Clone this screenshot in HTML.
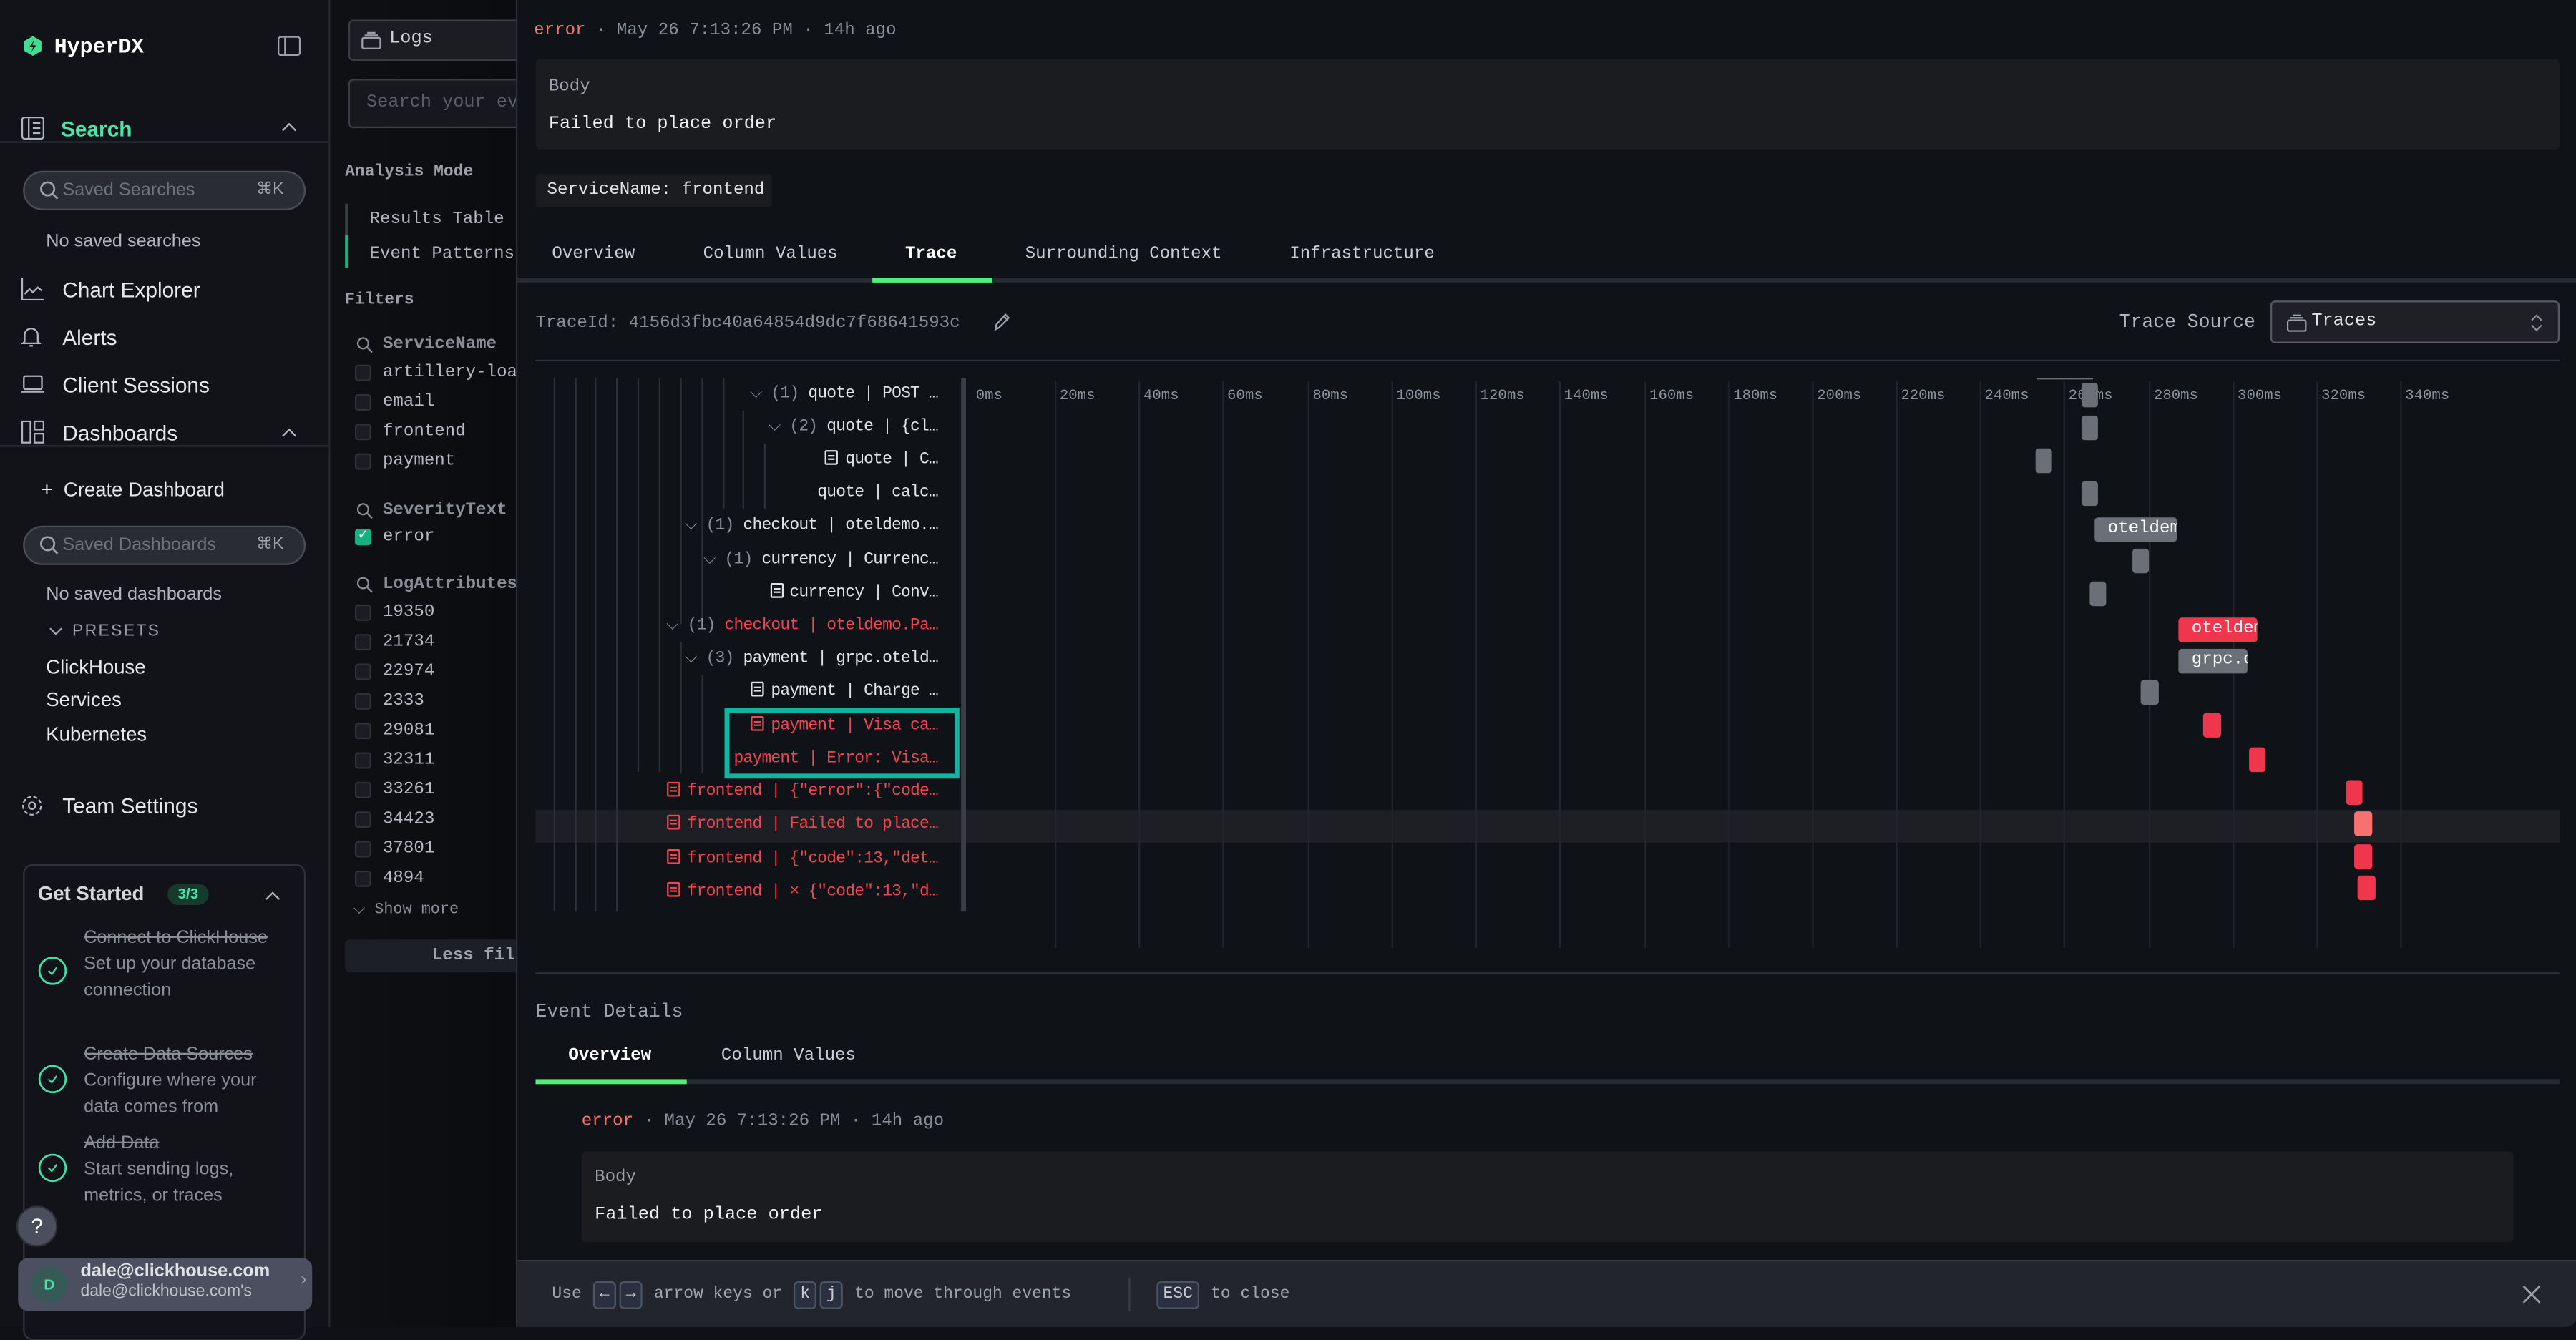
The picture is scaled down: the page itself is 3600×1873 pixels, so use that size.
<!DOCTYPE html>
<html><head><meta charset="utf-8"><style>
*{box-sizing:border-box;margin:0;padding:0}
html,body{width:3600px;height:1856px;overflow:hidden;background:#0f1116}
#w{position:absolute;left:0;top:0;width:1568px;height:808px;transform:scale(2.29592);transform-origin:0 0;background:#0f1116;font-family:"Liberation Sans",sans-serif;color:#c9ccd3}
.a{position:absolute;white-space:nowrap}
.m{font-family:"Liberation Mono",monospace}
.sb{left:0;top:0;width:201px;height:808px;background:#111318;border-right:1px solid #24272e}
.mid{left:201px;top:0;width:113px;height:808px;background:linear-gradient(90deg,#0e1014,#0b0c10)}
.dr{left:314px;top:0;width:1254px;height:808px;background:#0f1217;border-left:1px solid #2a2d33}
.nav{font-size:13px;color:#e6e7ea}
.pill{border:1px solid #4a4e57;background:#2a2c33;border-radius:14px;height:24px}
.cb{width:10px;height:10px;border:1px solid #2e3138;background:#1b1d22;border-radius:2px}
.fl{font-size:10.5px;color:#b7bac2}
.row{height:20px;font-size:10px;line-height:20px;letter-spacing:-0.35px}
.vl{position:absolute;width:1px;background:#2c2f35}
.bar{position:absolute;height:15px;border-radius:2px;background:#6b7078;font-size:10.5px;color:#fff;line-height:15px;padding-left:8px;overflow:hidden;font-family:"Liberation Mono",monospace}
.red{background:#f0364d}
.kb{display:inline-block;border:1px solid #4a5568;border-radius:3px;background:#2b3040;padding:0 3px;height:17px;line-height:15px;margin:0 1px;color:#c9ccd3}
.di{display:inline-block;width:8px;height:9px;border:1px solid currentColor;border-radius:1px;vertical-align:-1px;margin-right:4px;background:linear-gradient(currentColor,currentColor) 1px 2px/4px 1px no-repeat,linear-gradient(currentColor,currentColor) 1px 4px/4px 1px no-repeat}
</style></head><body><div id="w">

<!-- sidebar -->
<div class="a sb">
 <svg class="a" style="left:14px;top:22px" width="12" height="12" viewBox="0 0 12 12"><polygon points="6,0 11.2,3 11.2,9 6,12 0.8,9 0.8,3" fill="#3ee08f"/><path d="M6.8 2.5 4 6.4h2.2L5.2 9.5 8 5.6H5.8z" fill="#111318"/></svg>
 <div class="a m" style="left:33px;top:21px;font-size:13px;font-weight:bold;color:#fff">HyperDX</div>
 <svg class="a" style="left:169px;top:22px" width="14" height="12"><rect x=".5" y=".5" width="13" height="11" rx="1.5" fill="none" stroke="#9ca0a8"/><line x1="4.5" y1="1" x2="4.5" y2="11" stroke="#9ca0a8"/></svg>
 <svg class="a" style="left:13px;top:71px" width="14" height="14"><rect x=".5" y=".5" width="13" height="13" rx="1.5" fill="none" stroke="#b0b4bc"/><path d="M4.5 1v12M7 4h4.5M7 7h4.5M7 10h4.5" stroke="#b0b4bc"/></svg>
 <div class="a" style="left:37px;top:71px;font-size:13px;font-weight:bold;color:#4ee3a6">Search</div>
 <svg class="a" style="left:171px;top:74px" width="10" height="6"><path d="M1 5.5 5 1.5l4 4" fill="none" stroke="#b0b4bc"/></svg>
 <div class="a" style="left:0;top:86px;width:200px;height:1px;background:#2a2d33"></div>
 <div class="a pill" style="left:14px;top:104px;width:172px"></div>
 <svg class="a" style="left:24px;top:110px" width="12" height="12"><circle cx="5" cy="5" r="4" fill="none" stroke="#9ca0a8" stroke-width="1.2"/><path d="M8 8l3 3" stroke="#9ca0a8" stroke-width="1.2"/></svg>
 <div class="a" style="left:38px;top:110px;font-size:11px;color:#6d717a">Saved Searches</div>
 <div class="a" style="left:156px;top:110px;font-size:10px;color:#9ca0a8">⌘K</div>
 <div class="a" style="left:28px;top:141px;font-size:11px;color:#b0b4bc">No saved searches</div>
 <svg class="a" style="left:13px;top:169px" width="14" height="14"><path d="M.5 0v13.5H14M2 10l3-3 2 2 3-3 2.5 2" fill="none" stroke="#b0b4bc"/></svg>
 <div class="a nav" style="left:38px;top:169px">Chart Explorer</div>
 <svg class="a" style="left:13px;top:198px" width="12" height="14"><path d="M2 10V6a4 4 0 0 1 8 0v4l1 1H1zM5 12.5h2" fill="none" stroke="#b0b4bc"/></svg>
 <div class="a nav" style="left:38px;top:198px">Alerts</div>
 <svg class="a" style="left:13px;top:228px" width="14" height="12"><rect x="1.5" y="1" width="11" height="8" rx="1" fill="none" stroke="#b0b4bc"/><path d="M0 10.5h14" stroke="#b0b4bc"/></svg>
 <div class="a nav" style="left:38px;top:227px">Client Sessions</div>
 <svg class="a" style="left:13px;top:256px" width="14" height="14"><rect x=".5" y=".5" width="5" height="13" fill="none" stroke="#b0b4bc"/><rect x="8" y=".5" width="5.5" height="5" fill="none" stroke="#b0b4bc"/><rect x="8" y="8" width="5.5" height="5.5" fill="none" stroke="#b0b4bc"/></svg>
 <div class="a nav" style="left:38px;top:256px">Dashboards</div>
 <svg class="a" style="left:171px;top:260px" width="10" height="6"><path d="M1 5.5 5 1.5l4 4" fill="none" stroke="#b0b4bc"/></svg>
 <div class="a" style="left:0;top:271px;width:200px;height:1px;background:#2a2d33"></div>
 <div class="a" style="left:25px;top:291px;font-size:12px;color:#e6e7ea">+&nbsp; Create Dashboard</div>
 <div class="a pill" style="left:14px;top:320px;width:172px"></div>
 <svg class="a" style="left:24px;top:326px" width="12" height="12"><circle cx="5" cy="5" r="4" fill="none" stroke="#9ca0a8" stroke-width="1.2"/><path d="M8 8l3 3" stroke="#9ca0a8" stroke-width="1.2"/></svg>
 <div class="a" style="left:38px;top:326px;font-size:11px;color:#6d717a">Saved Dashboards</div>
 <div class="a" style="left:156px;top:326px;font-size:10px;color:#9ca0a8">⌘K</div>
 <div class="a" style="left:28px;top:356px;font-size:11px;color:#b0b4bc">No saved dashboards</div>
 <svg class="a" style="left:30px;top:382px" width="8" height="5"><path d="M.5.5 4 4 7.5.5" fill="none" stroke="#9ca0a8"/></svg>
 <div class="a" style="left:44px;top:379px;font-size:10px;color:#9ca0a8;letter-spacing:1px">PRESETS</div>
 <div class="a" style="left:28px;top:399px;font-size:12px;color:#e6e7ea">ClickHouse</div>
 <div class="a" style="left:28px;top:419px;font-size:12px;color:#e6e7ea">Services</div>
 <div class="a" style="left:28px;top:440px;font-size:12px;color:#e6e7ea">Kubernetes</div>
 <svg class="a" style="left:13px;top:484px" width="13" height="13"><circle cx="6.5" cy="6.5" r="2" fill="none" stroke="#b0b4bc"/><circle cx="6.5" cy="6.5" r="5.5" fill="none" stroke="#b0b4bc" stroke-dasharray="2.5 1.3"/></svg>
 <div class="a nav" style="left:38px;top:483px">Team Settings</div>
 <div class="a" style="left:14px;top:526px;width:172px;height:290px;border:1px solid #2e3138;border-radius:6px;background:#111318"></div>
 <div class="a" style="left:23px;top:537px;font-size:12px;font-weight:bold;color:#d4d6db">Get Started</div>
 <div class="a" style="left:102px;top:538px;width:25px;height:13px;border-radius:7px;background:#163a2e;color:#4ee3a6;font-size:9px;font-weight:bold;text-align:center;line-height:13px">3/3</div>
 <svg class="a" style="left:161px;top:542px" width="10" height="6"><path d="M1 5.5 5 1.5l4 4" fill="none" stroke="#b0b4bc"/></svg>
 <div class="a" style="left:51px;top:563px;font-size:11px;line-height:16px;color:#8a8e96;white-space:normal;width:125px"><s>Connect to ClickHouse</s><br>Set up your database connection</div>
 <div class="a" style="left:51px;top:634px;font-size:11px;line-height:16px;color:#8a8e96;white-space:normal;width:125px"><s>Create Data Sources</s><br>Configure where your data comes from</div>
 <div class="a" style="left:51px;top:688px;font-size:11px;line-height:16px;color:#8a8e96;white-space:normal;width:125px"><s>Add Data</s><br>Start sending logs, metrics, or traces</div>
 <svg class="a" style="left:23px;top:582px" width="18" height="18"><circle cx="9" cy="9" r="8" fill="none" stroke="#3ee0a6" stroke-width="1.2"/><path d="M6.5 9l2 2 3-4" fill="none" stroke="#3ee0a6"/></svg>
 <svg class="a" style="left:23px;top:648px" width="18" height="18"><circle cx="9" cy="9" r="8" fill="none" stroke="#3ee0a6" stroke-width="1.2"/><path d="M6.5 9l2 2 3-4" fill="none" stroke="#3ee0a6"/></svg>
 <svg class="a" style="left:23px;top:702px" width="18" height="18"><circle cx="9" cy="9" r="8" fill="none" stroke="#3ee0a6" stroke-width="1.2"/><path d="M6.5 9l2 2 3-4" fill="none" stroke="#3ee0a6"/></svg>
 <div class="a" style="left:10px;top:734px;width:25px;height:25px;border-radius:50%;background:#4b4e5c;border:1px solid #2e3138;color:#fff;text-align:center;line-height:24px;font-size:13px">?</div>
 <div class="a" style="left:11px;top:766px;width:179px;height:32px;border-radius:6px;background:#4c4f60"></div>
 <div class="a" style="left:19px;top:771px;width:22px;height:22px;border-radius:50%;background:#355a58;color:#4ee3a6;font-size:9px;font-weight:bold;text-align:center;line-height:22px">D</div>
 <div class="a" style="left:49px;top:768px;font-size:11px;font-weight:bold;color:#e0e2e6">dale@clickhouse.com</div>
 <div class="a" style="left:49px;top:781px;font-size:10px;color:#c0c2c8">dale@clickhouse.com's</div>
 <div class="a" style="left:183px;top:773px;font-size:11px;color:#9ca0a8">›</div>
</div>

<!-- middle -->
<div class="a mid m">
 <div class="a" style="left:11px;top:12px;width:110px;height:25px;border:1px solid #3a3d44;background:#1b1d22;border-radius:3px"></div>
 <svg class="a" style="left:19px;top:19px" width="12" height="11"><rect x=".5" y="4" width="11" height="6.5" rx="1" fill="none" stroke="#9ca0a8"/><path d="M2 2.5h8M3.5 1h5" stroke="#9ca0a8"/></svg>
 <div class="a" style="left:36px;top:18px;font-size:11px;color:#d0d2d6">Logs</div>
 <div class="a" style="left:11px;top:48px;width:110px;height:30px;border:1px solid #3a3d44;background:#16181d;border-radius:3px"></div>
 <div class="a" style="left:22px;top:57px;font-size:11px;color:#5a5e66">Search your ev</div>
 <div class="a" style="left:9px;top:100px;font-size:10px;font-weight:bold;color:#9ca0a8">Analysis Mode</div>
 <div class="a" style="left:9px;top:124px;width:2px;height:19px;background:#3a3d44"></div>
 <div class="a" style="left:9px;top:143px;width:2px;height:20px;background:#18b07f"></div>
 <div class="a" style="left:24px;top:128px;font-size:10.5px;color:#b0b4bc">Results Table</div>
 <div class="a" style="left:24px;top:149px;font-size:10.5px;color:#b0b4bc">Event Patterns</div>
 <div class="a" style="left:9px;top:178px;font-size:10px;font-weight:bold;color:#9ca0a8">Filters</div>
 <svg class="a" style="left:16px;top:205px" width="10" height="10"><circle cx="4" cy="4" r="3.2" fill="none" stroke="#8a8e96"/><path d="M6.5 6.5 9.5 9.5" stroke="#8a8e96"/></svg>
 <div class="a" style="left:32px;top:204px;font-size:10.5px;font-weight:bold;color:#8a8e96">ServiceName</div>
 <div class="a cb" style="left:15px;top:222px"></div><div class="a fl" style="left:32px;top:221px">artillery-loa</div>
 <div class="a cb" style="left:15px;top:240px"></div><div class="a fl" style="left:32px;top:239px">email</div>
 <div class="a cb" style="left:15px;top:258px"></div><div class="a fl" style="left:32px;top:257px">frontend</div>
 <div class="a cb" style="left:15px;top:276px"></div><div class="a fl" style="left:32px;top:275px">payment</div>
 <svg class="a" style="left:16px;top:306px" width="10" height="10"><circle cx="4" cy="4" r="3.2" fill="none" stroke="#8a8e96"/><path d="M6.5 6.5 9.5 9.5" stroke="#8a8e96"/></svg>
 <div class="a" style="left:32px;top:305px;font-size:10.5px;font-weight:bold;color:#8a8e96">SeverityText</div>
 <div class="a" style="left:15px;top:322px;width:10px;height:10px;border-radius:2px;background:#18b07f;color:#fff;font-size:8px;line-height:10px;text-align:center">✓</div><div class="a fl" style="left:32px;top:321px">error</div>
 <svg class="a" style="left:16px;top:351px" width="10" height="10"><circle cx="4" cy="4" r="3.2" fill="none" stroke="#8a8e96"/><path d="M6.5 6.5 9.5 9.5" stroke="#8a8e96"/></svg>
 <div class="a" style="left:32px;top:350px;font-size:10.5px;font-weight:bold;color:#8a8e96">LogAttributes</div>
 <div class="a cb" style="left:15px;top:368px"></div><div class="a fl" style="left:32px;top:367px">19350</div>
 <div class="a cb" style="left:15px;top:386px"></div><div class="a fl" style="left:32px;top:385px">21734</div>
 <div class="a cb" style="left:15px;top:404px"></div><div class="a fl" style="left:32px;top:403px">22974</div>
 <div class="a cb" style="left:15px;top:422px"></div><div class="a fl" style="left:32px;top:421px">2333</div>
 <div class="a cb" style="left:15px;top:440px"></div><div class="a fl" style="left:32px;top:439px">29081</div>
 <div class="a cb" style="left:15px;top:458px"></div><div class="a fl" style="left:32px;top:457px">32311</div>
 <div class="a cb" style="left:15px;top:476px"></div><div class="a fl" style="left:32px;top:475px">33261</div>
 <div class="a cb" style="left:15px;top:494px"></div><div class="a fl" style="left:32px;top:493px">34423</div>
 <div class="a cb" style="left:15px;top:512px"></div><div class="a fl" style="left:32px;top:511px">37801</div>
 <div class="a cb" style="left:15px;top:530px"></div><div class="a fl" style="left:32px;top:529px">4894</div>
 <div class="a" style="left:14px;top:548px;font-size:9.5px;color:#8a8e96">⌵ Show more</div>
 <div class="a" style="left:9px;top:572px;width:110px;height:20px;background:#1c1f26;border-radius:3px"></div>
 <div class="a" style="left:62px;top:576px;font-size:10.5px;font-weight:bold;color:#9ca0a8">Less fil</div>
</div>

<!-- drawer -->
<div class="a dr m">
 <div class="a" style="left:10px;top:13px;font-size:10.5px;color:#8a8e96"><span style="color:#f87171">error</span> · May 26 7:13:26 PM · 14h ago</div>
 <div class="a" style="left:11px;top:36px;width:1232px;height:55px;background:#1b1c20;border-radius:3px"></div>
 <div class="a" style="left:19px;top:47px;font-size:10.5px;color:#9ca0a8">Body</div>
 <div class="a" style="left:19px;top:70px;font-size:11px;color:#f0f1f3">Failed to place order</div>
 <div class="a" style="left:11px;top:106px;width:144px;height:20px;background:#1b1c20;border-radius:2px"></div>
 <div class="a" style="left:18px;top:110px;font-size:10.5px;color:#e0e2e6">ServiceName: frontend</div>
 <div class="a" style="left:21px;top:149px;font-size:10.5px;color:#c9ccd3">Overview</div>
 <div class="a" style="left:113px;top:149px;font-size:10.5px;color:#c9ccd3">Column Values</div>
 <div class="a" style="left:236px;top:149px;font-size:10.5px;font-weight:bold;color:#fff">Trace</div>
 <div class="a" style="left:309px;top:149px;font-size:10.5px;color:#c9ccd3">Surrounding Context</div>
 <div class="a" style="left:470px;top:149px;font-size:10.5px;color:#c9ccd3">Infrastructure</div>
 <div class="a" style="left:0;top:169px;width:1254px;height:3px;background:#262a31"></div>
 <div class="a" style="left:216px;top:169px;width:73px;height:3px;background:#4ef07a"></div>
 <div class="a" style="left:11px;top:191px;font-size:10.5px;color:#8a8e96">TraceId: 4156d3fbc40a64854d9dc7f68641593c</div>
 <svg class="a" style="left:289px;top:190px" width="11" height="12"><path d="M2 10.5l.5-3L8 1.5l2 2-6 6zM7 2.5l2 2" fill="none" stroke="#9ca0a8"/></svg>
 <div class="a" style="left:975px;top:190px;font-size:11.5px;color:#b0b4bc">Trace Source</div>
 <div class="a" style="left:1067px;top:183px;width:176px;height:26px;border:1px solid #55585f;background:#1e2026;border-radius:3px"></div>
 <svg class="a" style="left:1077px;top:191px" width="12" height="11"><rect x=".5" y="4" width="11" height="6.5" rx="1" fill="none" stroke="#9ca0a8"/><path d="M2 2.5h8M3.5 1h5" stroke="#9ca0a8"/></svg>
 <div class="a" style="left:1092px;top:190px;font-size:11px;color:#e0e2e6">Traces</div>
 <svg class="a" style="left:1225px;top:191px" width="8" height="11"><path d="M1 4 4 1l3 3M1 7l3 3 3-3" fill="none" stroke="#8a8e96"/></svg>
 <div class="a" style="left:11px;top:219px;width:1232px;height:1px;background:#2e3138"></div>

 <!-- trace area -->
 <div class="a" style="left:11px;top:493px;width:1232px;height:20px;background:#1e1f24"></div>
 <div class="vl" style="left:22px;top:230px;height:325px"></div>
 <div class="vl" style="left:35px;top:230px;height:325px"></div>
 <div class="vl" style="left:47px;top:230px;height:325px"></div>
 <div class="vl" style="left:60px;top:230px;height:325px"></div>
 <div class="vl" style="left:73px;top:230px;height:240px"></div>
 <div class="vl" style="left:86px;top:230px;height:240px"></div>
 <div class="vl" style="left:99px;top:230px;height:150px"></div>
 <div class="vl" style="left:112px;top:230px;height:150px"></div>
 <div class="vl" style="left:125px;top:230px;height:80px"></div>
 <div class="vl" style="left:137px;top:250px;height:60px"></div>
 <div class="vl" style="left:150px;top:270px;height:40px"></div>
 <div class="vl" style="left:112px;top:330px;height:50px"></div>
 <div class="vl" style="left:99px;top:391px;height:80px"></div>
 <div class="vl" style="left:112px;top:411px;height:60px"></div>
 <div class="a" style="left:270px;top:230px;width:3px;height:325px;background:#3a3d44"></div>

 <div class="a row" style="right:997px;top:231px;color:#e0e2e6"><span style="color:#8a8e96">⌵ (1)</span> quote | POST …</div>
 <div class="a row" style="right:997px;top:251px;color:#e0e2e6"><span style="color:#8a8e96">⌵ (2)</span> quote | {cl…</div>
 <div class="a row" style="right:997px;top:271px;color:#e0e2e6"><i class="di"></i>quote | C…</div>
 <div class="a row" style="right:997px;top:291px;color:#e0e2e6">quote | calc…</div>
 <div class="a row" style="right:997px;top:311px;color:#e0e2e6"><span style="color:#8a8e96">⌵ (1)</span> checkout | oteldemo.…</div>
 <div class="a row" style="right:997px;top:332px;color:#e0e2e6"><span style="color:#8a8e96">⌵ (1)</span> currency | Currenc…</div>
 <div class="a row" style="right:997px;top:352px;color:#e0e2e6"><i class="di"></i>currency | Conv…</div>
 <div class="a row" style="right:997px;top:372px;color:#f0464f"><span style="color:#8a8e96">⌵ (1)</span> checkout | oteldemo.Pa…</div>
 <div class="a row" style="right:997px;top:392px;color:#e0e2e6"><span style="color:#8a8e96">⌵ (3)</span> payment | grpc.oteld…</div>
 <div class="a row" style="right:997px;top:412px;color:#e0e2e6"><i class="di"></i>payment | Charge …</div>
 <div class="a row" style="right:997px;top:433px;color:#f0464f"><i class="di"></i>payment | Visa ca…</div>
 <div class="a row" style="right:997px;top:453px;color:#f0464f">payment | Error: Visa…</div>
 <div class="a row" style="right:997px;top:473px;color:#f0464f"><i class="di"></i>frontend | {"error":{"code…</div>
 <div class="a row" style="right:997px;top:493px;color:#f0464f"><i class="di"></i>frontend | Failed to place…</div>
 <div class="a row" style="right:997px;top:514px;color:#f0464f"><i class="di"></i>frontend | {"code":13,"det…</div>
 <div class="a row" style="right:997px;top:534px;color:#f0464f"><i class="di"></i>frontend | × {"code":13,"d…</div>
 <div class="a" style="left:126px;top:431px;width:143px;height:43px;border:3px solid #0fb5a0"></div>

 <!-- timeline -->
 <div class="vl" style="left:327px;top:232px;height:345px;background:#22252b"></div>
 <div class="vl" style="left:378px;top:232px;height:345px;background:#22252b"></div>
 <div class="vl" style="left:429px;top:232px;height:345px;background:#22252b"></div>
 <div class="vl" style="left:481px;top:232px;height:345px;background:#22252b"></div>
 <div class="vl" style="left:532px;top:232px;height:345px;background:#22252b"></div>
 <div class="vl" style="left:583px;top:232px;height:345px;background:#22252b"></div>
 <div class="vl" style="left:634px;top:232px;height:345px;background:#22252b"></div>
 <div class="vl" style="left:686px;top:232px;height:345px;background:#22252b"></div>
 <div class="vl" style="left:737px;top:232px;height:345px;background:#22252b"></div>
 <div class="vl" style="left:788px;top:232px;height:345px;background:#22252b"></div>
 <div class="vl" style="left:839px;top:232px;height:345px;background:#22252b"></div>
 <div class="vl" style="left:890px;top:232px;height:345px;background:#22252b"></div>
 <div class="vl" style="left:941px;top:232px;height:345px;background:#22252b"></div>
 <div class="vl" style="left:993px;top:232px;height:345px;background:#22252b"></div>
 <div class="vl" style="left:1044px;top:232px;height:345px;background:#22252b"></div>
 <div class="vl" style="left:1095px;top:232px;height:345px;background:#22252b"></div>
 <div class="vl" style="left:1146px;top:232px;height:345px;background:#22252b"></div>
 <div class="a" style="left:279px;top:236px;font-size:9px;color:#8a92a0">0ms</div>
 <div class="a" style="left:330px;top:236px;font-size:9px;color:#8a92a0">20ms</div>
 <div class="a" style="left:381px;top:236px;font-size:9px;color:#8a92a0">40ms</div>
 <div class="a" style="left:432px;top:236px;font-size:9px;color:#8a92a0">60ms</div>
 <div class="a" style="left:484px;top:236px;font-size:9px;color:#8a92a0">80ms</div>
 <div class="a" style="left:535px;top:236px;font-size:9px;color:#8a92a0">100ms</div>
 <div class="a" style="left:586px;top:236px;font-size:9px;color:#8a92a0">120ms</div>
 <div class="a" style="left:637px;top:236px;font-size:9px;color:#8a92a0">140ms</div>
 <div class="a" style="left:689px;top:236px;font-size:9px;color:#8a92a0">160ms</div>
 <div class="a" style="left:740px;top:236px;font-size:9px;color:#8a92a0">180ms</div>
 <div class="a" style="left:791px;top:236px;font-size:9px;color:#8a92a0">200ms</div>
 <div class="a" style="left:842px;top:236px;font-size:9px;color:#8a92a0">220ms</div>
 <div class="a" style="left:893px;top:236px;font-size:9px;color:#8a92a0">240ms</div>
 <div class="a" style="left:944px;top:236px;font-size:9px;color:#8a92a0">260ms</div>
 <div class="a" style="left:996px;top:236px;font-size:9px;color:#8a92a0">280ms</div>
 <div class="a" style="left:1047px;top:236px;font-size:9px;color:#8a92a0">300ms</div>
 <div class="a" style="left:1098px;top:236px;font-size:9px;color:#8a92a0">320ms</div>
 <div class="a" style="left:1149px;top:236px;font-size:9px;color:#8a92a0">340ms</div>
 <div class="a" style="left:925px;top:230px;width:34px;height:1px;background:#6b7078"></div>

 <div class="bar" style="left:952px;top:233px;width:10px"></div>
 <div class="bar" style="left:952px;top:253px;width:10px"></div>
 <div class="bar" style="left:924px;top:273px;width:10px"></div>
 <div class="bar" style="left:952px;top:293px;width:10px"></div>
 <div class="bar" style="left:960px;top:315px;width:50px">oteldem</div>
 <div class="bar" style="left:983px;top:334px;width:10px"></div>
 <div class="bar" style="left:957px;top:354px;width:10px"></div>
 <div class="bar red" style="left:1011px;top:376px;width:48px">oteldem</div>
 <div class="bar" style="left:1011px;top:395px;width:42px">grpc.o</div>
 <div class="bar" style="left:988px;top:414px;width:11px"></div>
 <div class="bar red" style="left:1026px;top:434px;width:11px"></div>
 <div class="bar red" style="left:1054px;top:455px;width:10px"></div>
 <div class="bar red" style="left:1113px;top:475px;width:10px"></div>
 <div class="bar" style="left:1118px;top:494px;width:11px;background:#f87171"></div>
 <div class="bar red" style="left:1118px;top:514px;width:11px"></div>
 <div class="bar red" style="left:1120px;top:533px;width:11px"></div>
 <div class="a" style="left:11px;top:592px;width:1232px;height:1px;background:#2e3138"></div>

 <div class="a" style="left:11px;top:610px;font-size:11.5px;color:#9ca0a8">Event Details</div>
 <div class="a" style="left:31px;top:637px;font-size:10.5px;font-weight:bold;color:#fff">Overview</div>
 <div class="a" style="left:124px;top:637px;font-size:10.5px;color:#c9ccd3">Column Values</div>
 <div class="a" style="left:11px;top:657px;width:1232px;height:3px;background:#262a31"></div>
 <div class="a" style="left:11px;top:657px;width:92px;height:3px;background:#4ef07a"></div>
 <div class="a" style="left:39px;top:677px;font-size:10.5px;color:#8a8e96"><span style="color:#f87171">error</span> · May 26 7:13:26 PM · 14h ago</div>
 <div class="a" style="left:39px;top:701px;width:1176px;height:55px;background:#1b1c20;border-radius:3px"></div>
 <div class="a" style="left:47px;top:711px;font-size:10.5px;color:#9ca0a8">Body</div>
 <div class="a" style="left:47px;top:734px;font-size:11px;color:#f0f1f3">Failed to place order</div>

 <div class="a" style="left:0;top:767px;width:1254px;height:41px;background:#22252b;border-top:1px solid #363a42;border-bottom-right-radius:8px"></div>
 <div class="a" style="left:21px;top:780px;font-size:10px;color:#a0a4ac">Use <span class="kb">←</span><span class="kb">→</span> arrow keys or <span class="kb">k</span><span class="kb">j</span> to move through events</div>
 <div class="a" style="left:372px;top:778px;width:1px;height:20px;background:#3a3d44"></div>
 <div class="a" style="left:388px;top:780px;font-size:10px;color:#a0a4ac"><span class="kb">ESC</span> to close</div>
 <svg class="a" style="left:1220px;top:782px" width="12" height="12"><path d="M1 1l10 10M11 1 1 11" stroke="#9ca0a8" stroke-width="1.2"/></svg>
</div>
</div></body></html>
